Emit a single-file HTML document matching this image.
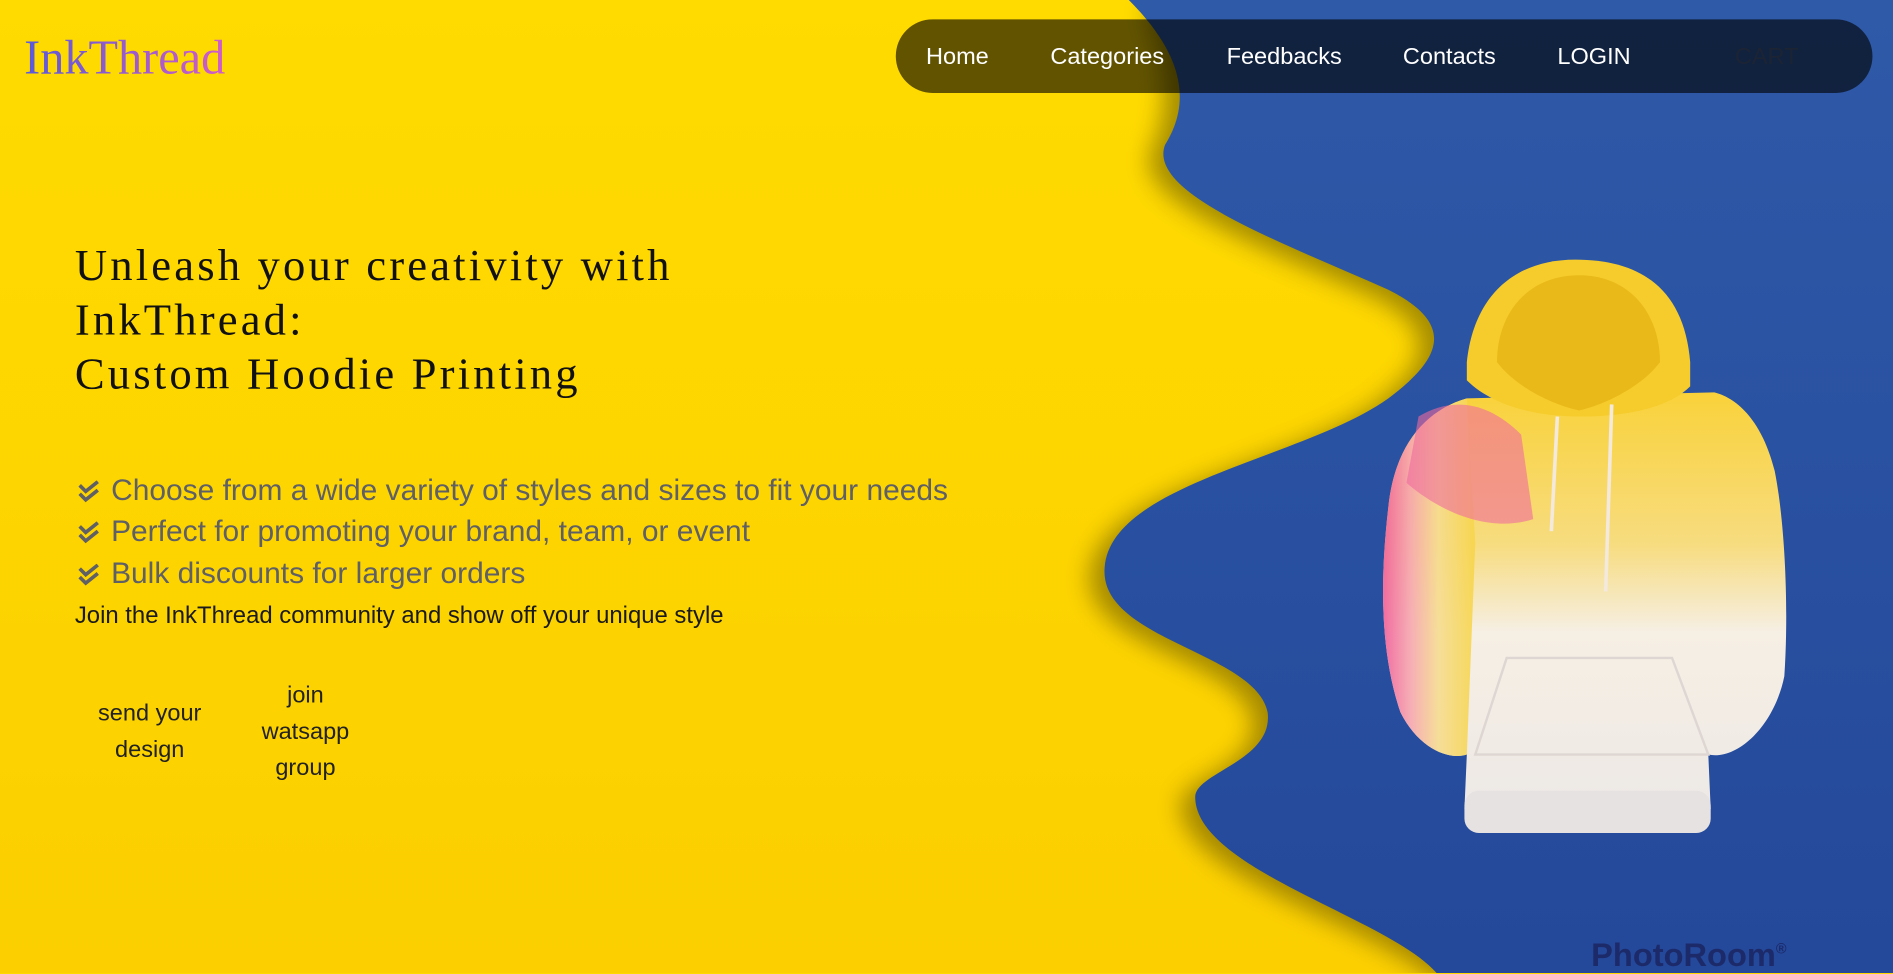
<!DOCTYPE html>
<html><head><meta charset="utf-8"><style>
html,body{margin:0;padding:0;width:1893px;height:973px;overflow:hidden;background:#ffd800}
#w{position:absolute;left:0;top:0;width:1568px;height:806px;transform:scale(1.20727);transform-origin:0 0;font-family:"Liberation Sans",sans-serif}
.abs{position:absolute}
.logo{left:20px;top:24px;font-family:"Liberation Serif",serif;font-size:40px;background:linear-gradient(90deg,#5a5ad8,#d35cc8);-webkit-background-clip:text;background-clip:text;color:transparent}
.nav{left:742px;top:16px;width:809px;height:61px;border-radius:31px;background:rgba(0,0,0,0.62)}
.nav span{position:absolute;top:20px;color:#fff;font-size:19.5px}
h1{position:absolute;left:62px;top:198px;margin:0;font-family:"Liberation Serif",serif;font-weight:normal;font-size:37px;line-height:45px;letter-spacing:2.6px;color:#111}
.b{position:absolute;left:64px;font-size:24.8px;color:#5f5f66}
.b svg{position:absolute;left:0;top:5px}
.b span{position:absolute;left:28px;white-space:nowrap}
.btn{position:absolute;text-align:center;font-size:19.5px;line-height:30px;color:#222}
</style></head><body><div id="w">
<svg class="abs" style="left:0;top:0" width="1568" height="806" viewBox="0 0 1568 806">
<defs>
<linearGradient id="y" x1="0" y1="0" x2="0" y2="1"><stop offset="0" stop-color="#ffdb00"/><stop offset="1" stop-color="#fbcf00"/></linearGradient>
<linearGradient id="bl" x1="0" y1="0" x2="0" y2="1"><stop offset="0" stop-color="#2f5aa8"/><stop offset="1" stop-color="#24489a"/></linearGradient>
<filter id="sh" x="-20%" y="-20%" width="140%" height="140%"><feGaussianBlur stdDeviation="10"/></filter>
<linearGradient id="hb" x1="0" y1="0" x2="0" y2="1"><stop offset="0" stop-color="#f9d23a"/><stop offset="0.35" stop-color="#f7dc80"/><stop offset="0.55" stop-color="#f6efe4"/><stop offset="1" stop-color="#ece8e6"/></linearGradient>
<linearGradient id="hs" x1="0" y1="0" x2="1" y2="0"><stop offset="0" stop-color="#f05f9a"/><stop offset="0.3" stop-color="#f6a7b0"/><stop offset="0.6" stop-color="#f6dc90"/><stop offset="1" stop-color="#f7d54a"/></linearGradient>
</defs>
<rect width="1568" height="806" fill="url(#y)"/>
<path d="M960,0 C975,40 985,80 965,120 C950,160 1060,200 1150,240 C1210,270 1190,300 1150,330 C1080,380 920,400 915,470 C910,530 1040,540 1050,590 C1055,630 990,640 990,660 C990,720 1150,760 1200,806 L1568,806 L1568,0 Z" fill="#000" opacity="0.35" filter="url(#sh)" transform="translate(-12,6)"/>
<path d="M935,0 C975,40 990,80 965,120 C950,160 1060,200 1150,240 C1210,270 1190,300 1150,330 C1080,380 920,400 915,470 C910,530 1040,540 1050,590 C1055,630 990,640 990,660 C990,720 1150,760 1190,806 L1568,806 L1568,0 Z" fill="url(#bl)"/>
<path d="M1215,330 C1180,340 1155,370 1150,420 C1143,480 1143,540 1160,590 C1175,620 1200,630 1215,625 L1213,670 C1260,692 1370,692 1417,670 L1415,625 C1440,630 1470,600 1478,560 C1482,500 1478,430 1470,390 C1460,350 1440,330 1420,325 Z" fill="url(#hb)"/>
<path d="M1215,330 C1180,340 1155,370 1150,420 C1143,480 1143,540 1160,590 C1175,620 1200,630 1215,625 L1222,450 Z" fill="url(#hs)" opacity="0.9"/>
<path d="M1175,345 C1200,330 1230,330 1260,360 L1270,430 C1240,440 1200,430 1165,400 Z" fill="#f06a9e" opacity="0.6"/>
<path d="M1215,300 C1220,250 1250,215 1305,215 C1360,215 1395,240 1400,300 L1400,320 C1380,340 1340,345 1308,345 C1270,345 1235,335 1215,315 Z" fill="#f6cc2c"/>
<path d="M1240,300 C1240,260 1265,228 1308,228 C1350,228 1375,260 1375,300 C1360,320 1330,335 1308,340 C1285,335 1255,320 1240,300 Z" fill="#e9b919"/>
<path d="M1290,345 L1285,440 M1335,335 L1330,490" stroke="#f3e9dc" stroke-width="3" fill="none"/>
<path d="M1248,545 L1385,545 L1415,625 L1222,625 Z" fill="none" stroke="#ddd6d2" stroke-width="2"/>
<rect x="1213" y="655" width="204" height="35" rx="12" fill="#e6e2e1"/>
</svg>
<div class="abs logo">InkThread</div>
<div class="abs nav">
<span style="left:25px">Home</span><span style="left:128px">Categories</span><span style="left:274px">Feedbacks</span><span style="left:420px">Contacts</span><span style="left:548px">LOGIN</span><span style="left:695px;color:#1c2434">CART</span>
</div>
<h1>Unleash your creativity with<br>InkThread:<br>Custom Hoodie Printing</h1>
<div class="b" style="top:393px"><svg width="20" height="20" viewBox="0 0 20 20"><path d="M2,4 L7,9 L17,1 M2,11 L7,16 L17,8" stroke="#5f5f66" stroke-width="3" fill="none"/></svg><span>Choose from a wide variety of styles and sizes to fit your needs</span></div>
<div class="b" style="top:427px"><svg width="20" height="20" viewBox="0 0 20 20"><path d="M2,4 L7,9 L17,1 M2,11 L7,16 L17,8" stroke="#5f5f66" stroke-width="3" fill="none"/></svg><span>Perfect for promoting your brand, team, or event</span></div>
<div class="b" style="top:462px"><svg width="20" height="20" viewBox="0 0 20 20"><path d="M2,4 L7,9 L17,1 M2,11 L7,16 L17,8" stroke="#5f5f66" stroke-width="3" fill="none"/></svg><span>Bulk discounts for larger orders</span></div>
<div class="abs" style="left:62px;top:499px;font-size:19.8px;color:#1a1a1a;white-space:nowrap">Join the InkThread community and show off your unique style</div>
<div class="btn" style="left:64px;top:576px;width:120px">send your<br>design</div>
<div class="btn" style="left:198px;top:561px;width:110px">join<br>watsapp<br>group</div>
<div class="abs" style="left:1318px;top:776px;font-size:27px;font-weight:bold;color:#1c2a6a">PhotoRoom<sup style="font-size:12px">®</sup></div>
</div></body></html>
